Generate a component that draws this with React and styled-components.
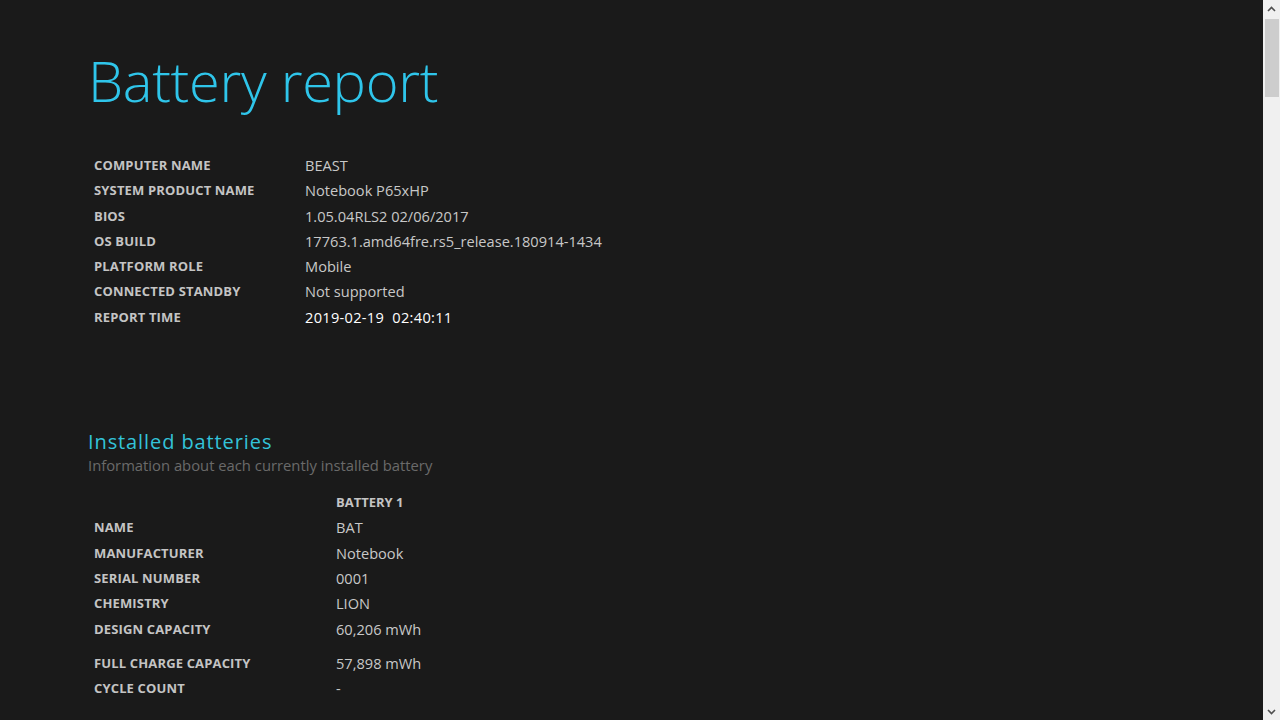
import React from "react";
import styled, { createGlobalStyle } from "styled-components";

const systemInfo = [
  { label: "Computer name", value: "BEAST" },
  { label: "System product name", value: "Notebook P65xHP" },
  { label: "BIOS", value: "1.05.04RLS2 02/06/2017" },
  { label: "OS build", value: "17763.1.amd64fre.rs5_release.180914-1434" },
  { label: "Platform role", value: "Mobile" },
  { label: "Connected standby", value: "Not supported" },
  { label: "Report time", value: "2019-02-19\u00a0\u00a002:40:11", strong: true },
];

const batteryInfo = [
  { label: "Name", value: "BAT" },
  { label: "Manufacturer", value: "Notebook" },
  { label: "Serial number", value: "0001" },
  { label: "Chemistry", value: "LION" },
  { label: "Design capacity", value: "60,206 mWh" },
  { label: "Full charge capacity", value: "57,898 mWh", spaced: true },
  { label: "Cycle count", value: "-" },
];

const App = () => {
  return (
    <>
      <GlobalStyle />
      <Screen>
        <Report>
          <Title>Battery report</Title>

          <InfoTable $labelWidth={211}>
            {systemInfo.map(row => (
              <Row key={row.label}>
                <Label>{row.label}</Label>
                <Value $strong={row.strong}>{row.value}</Value>
              </Row>
            ))}
          </InfoTable>

          <Section>
            <SectionTitle>Installed batteries</SectionTitle>
            <SectionSub>Information about each currently installed battery</SectionSub>

            <InfoTable $labelWidth={242}>
              <Row>
                <Label />
                <ColumnHead>Battery 1</ColumnHead>
              </Row>
              {batteryInfo.map(row => (
                <Row key={row.label} $spaced={row.spaced}>
                  <Label>{row.label}</Label>
                  <Value>{row.value}</Value>
                </Row>
              ))}
            </InfoTable>
          </Section>
        </Report>

        <Scrollbar>
          <Arrow>
            <svg width="9" height="6" viewBox="0 0 9 6">
              <path d="M1 5 L4.5 1.5 L8 5" fill="none" stroke="#505050" strokeWidth="1.6" />
            </svg>
          </Arrow>
          <Track>
            <Thumb />
          </Track>
          <Arrow>
            <svg width="9" height="6" viewBox="0 0 9 6">
              <path d="M1 1 L4.5 4.5 L8 1" fill="none" stroke="#505050" strokeWidth="1.6" />
            </svg>
          </Arrow>
        </Scrollbar>
      </Screen>
    </>
  );
};

export default App;


const GlobalStyle = createGlobalStyle`
    html, body {
        margin: 0;
        padding: 0;
        background: #1a1a1a;
        overflow: hidden;
    }
    body {
        font-family: "Open Sans", "Noto Sans", sans-serif;
    }
`

const Screen = styled.div`
    display: grid;
    grid-template-columns: 1fr 17px;
    height: 720px;
    width: 1280px;
    background: #1a1a1a;
`

const Report = styled.main`
    padding: 45px 0 0 88px;
    overflow: hidden;
`

const Title = styled.h1`
    margin: 0 0 38px 0;
    font-size: 56px;
    font-weight: 300;
    line-height: 70px;
    color: #2fc5ea;
    letter-spacing: -0.3px;
`

const InfoTable = styled.div`
    display: grid;
    grid-template-columns: ${p => p.$labelWidth}px 1fr;
    padding-left: 6px;
`

const Row = styled.div`
    display: contents;

    & > * {
        height: 25.3px;
        line-height: 25.3px;
        margin-top: ${p => (p.$spaced ? "9px" : "0")};
    }
`

const Label = styled.div`
    font-size: 13px;
    font-weight: 700;
    text-transform: uppercase;
    color: #c4c4c4;
    letter-spacing: 0.15px;
    white-space: nowrap;
`

const Value = styled.div`
    font-size: 14.6px;
    color: ${p => (p.$strong ? "#ffffff" : "#c8c8c8")};
    font-weight: 400;
    letter-spacing: ${p => (p.$strong ? "0.3px" : "0")};
    white-space: nowrap;
`

const ColumnHead = styled.div`
    font-size: 13px;
    font-weight: 700;
    text-transform: uppercase;
    color: #c4c4c4;
`

const Section = styled.section`
    margin-top: 100px;
`

const SectionTitle = styled.h2`
    margin: 0;
    font-size: 20px;
    font-weight: 400;
    line-height: 24px;
    letter-spacing: 0.9px;
    color: #33c3d9;
`

const SectionSub = styled.p`
    margin: 0 0 14px 0;
    font-size: 14.8px;
    line-height: 22px;
    color: #6a6a6a;
`

const Scrollbar = styled.div`
    display: flex;
    flex-direction: column;
    background: #f0f0f0;
`

const Arrow = styled.div`
    height: 17px;
    display: flex;
    align-items: center;
    justify-content: center;
`

const Track = styled.div`
    flex: 1;
    padding: 2px 1px 0 2px;
`

const Thumb = styled.div`
    height: 78px;
    background: #cdcdcd;
`
